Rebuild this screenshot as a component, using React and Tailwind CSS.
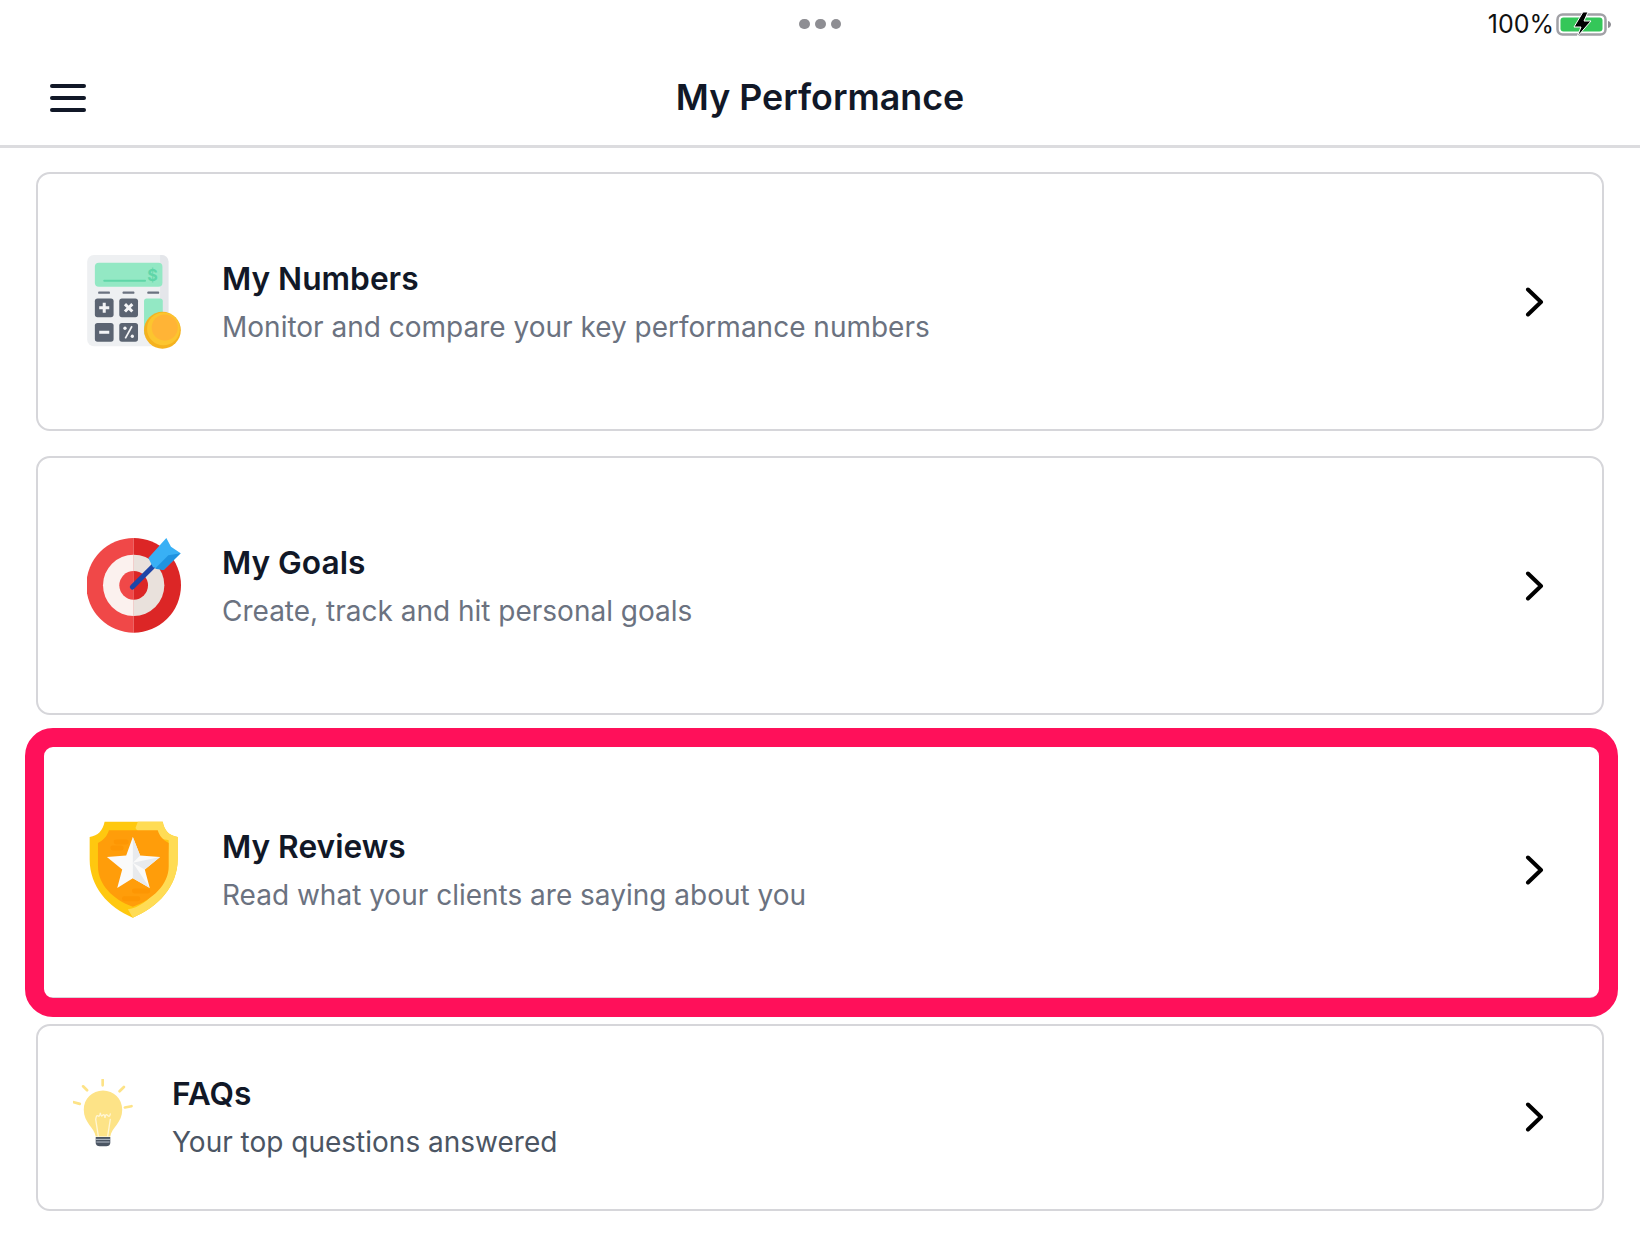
function Chevron() {
  return (
    <svg width="20" height="30" viewBox="0 0 20 30" fill="none" className="shrink-0">
      <path d="M3 2.5 L16 15 L3 27.5" stroke="#000" strokeWidth="4" strokeLinecap="round" strokeLinejoin="round" />
    </svg>
  );
}

function BatteryIcon() {
  return (
    <svg width="58" height="26" viewBox="0 0 58 26">
      <rect x="1.5" y="3.5" width="48" height="20" rx="5" fill="none" stroke="#a1a1a6" strokeWidth="2.5" />
      <rect x="4.5" y="6.5" width="42" height="14" rx="3" fill="#34c759" />
      <path d="M52 10 C54 10.5 55 12 55 13.5 C55 15 54 16.5 52 17 Z" fill="#8e8e93" />
      <path d="M27 1 L18 16 H25 L21 26 L35 10 H28 L32 1 Z" fill="#000" stroke="#fff" strokeWidth="1" />
    </svg>
  );
}

function CalculatorIcon() {
  return (
    <svg width="94" height="97" viewBox="52 45 280 290" className="mt-[4px]">
      <rect x="52" y="45" width="243" height="273" rx="20" fill="#eef0f2" />
      <path d="M270 45 h5 a20 20 0 0 1 20 20 v233 a20 20 0 0 1 -20 20 h-5 z" fill="#e4e6ea" />
      <rect x="75" y="68" width="202" height="72" rx="12" fill="#93e8c4" />
      <rect x="100" y="119" width="128" height="6" rx="3" fill="#5fd6a8" />
      <text x="247" y="124" fontSize="48" fontWeight="700" textAnchor="middle" fill="#5fd6a8" fontFamily="Inter, sans-serif">$</text>
      <rect x="85" y="154" width="35" height="7" rx="2" fill="#6b7280" />
      <rect x="158" y="154" width="35" height="7" rx="2" fill="#6b7280" />
      <rect x="232" y="154" width="35" height="7" rx="2" fill="#6b7280" />
      <rect x="222" y="175" width="56" height="110" rx="8" fill="#93e8c4" />
      <rect x="75" y="175" width="56" height="56" rx="8" fill="#5b6472" />
      <rect x="148" y="175" width="56" height="56" rx="8" fill="#5b6472" />
      <rect x="75" y="248" width="56" height="56" rx="8" fill="#5b6472" />
      <rect x="148" y="248" width="56" height="56" rx="8" fill="#5b6472" />
      <path d="M103 188 V218 M88 203 H118" stroke="#f3f4f6" strokeWidth="9" />
      <path d="M165 192 L187 214 M187 192 L165 214" stroke="#f3f4f6" strokeWidth="9" />
      <path d="M88 276 H118" stroke="#f3f4f6" strokeWidth="9" />
      <path d="M166 294 L186 258" stroke="#f3f4f6" strokeWidth="5" />
      <circle cx="165" cy="264" r="5" fill="#f3f4f6" />
      <circle cx="187" cy="288" r="5" fill="#f3f4f6" />
      <circle cx="277" cy="270" r="55" fill="#f5b21f" />
      <circle cx="280" cy="266" r="49" fill="#fcc52f" />
      <circle cx="284" cy="262" r="39" fill="#ffb436" />
    </svg>
  );
}

function TargetIcon() {
  return (
    <svg width="94" height="95" viewBox="52 40 282 285">
      <path d="M192 40 a142 142 0 0 0 0 284 z" fill="#f04848" />
      <path d="M192 40 a142 142 0 0 1 0 284 z" fill="#dc2626" />
      <path d="M192 90 a92 92 0 0 0 0 184 z" fill="#fbf1ee" />
      <path d="M192 90 a92 92 0 0 1 0 184 z" fill="#e9e1dc" />
      <path d="M192 139 a43 43 0 0 0 0 86 z" fill="#f04848" />
      <path d="M192 139 a43 43 0 0 1 0 86 z" fill="#dc2626" />
      <path d="M188 187 L252 123" stroke="#1e46a8" strokeWidth="15" strokeLinecap="round" />
      <path d="M236 100 L290 40 L304 66 L333 86 L282 136 L250 128 Z" fill="#38b0f5" />
      <path d="M333 86 L282 136 L256 132 L296 92 Z" fill="#1f93e0" />
    </svg>
  );
}

function ShieldIcon() {
  return (
    <svg width="89" height="97" viewBox="58 35 268 290">
      <path d="M105 36 H280 C284 62 300 78 325 82 V150 C325 230 265 295 190 325 C115 295 60 230 60 150 V82 C85 78 100 62 105 36 Z" fill="#ffc80f" />
      <path d="M205 36 H280 C284 62 300 78 325 82 V150 C325 230 265 295 190 325 L175 300 C240 290 298 220 298 92 C270 85 210 80 198 55 Z" fill="#ffdc55" />
      <path d="M118 62 H265 C270 78 280 92 298 100 V170 C298 225 250 270 190 292 C130 270 85 225 85 170 V100 C103 92 113 78 118 62 Z" fill="#ff9d0a" />
      <path d="M140 97 H170 M130 115 H155 M195 245 H235 M165 268 H205" stroke="#fd9603" strokeWidth="15" strokeLinecap="round" />
      <path d="M190 82 L212 138 L272 142 L226 180 L241 236 L190 206 L143 236 L158 180 L112 142 L170 138 Z" fill="#fafafa" />
      <path d="M190 82 L212 138 L190 160 Z M272 142 L226 180 L190 160 Z M241 236 L190 206 L190 160 Z" fill="#e8eaed" />
    </svg>
  );
}

function BulbIcon() {
  return (
    <svg width="60" height="68" viewBox="40 33 180 205" className="mb-[8px]">
      <path d="M108 206 C104 180 72 165 72 126 C72 93 98 68 130 68 C162 68 188 93 188 126 C188 165 156 180 152 206 Z" fill="#fde387" />
      <path d="M116 206 L108 155 M144 206 L152 155 M108 155 C112 128 118 160 122 135 C126 160 132 125 136 150 C140 125 148 160 152 138" fill="none" stroke="#fff6d5" strokeWidth="4" strokeLinecap="round" />
      <path d="M108 208 H152 V226 C152 232 146 236 140 236 H120 C114 236 108 232 108 226 Z" fill="#4b5563" />
      <path d="M108 215 H152 M110 223 H150" stroke="#cbd5e1" strokeWidth="2.5" />
      <path d="M129 35 V52 M70 55 L82 67 M193 57 L180 70 M42 103 L60 108 M216 115 L196 119" stroke="#fde387" strokeWidth="8" strokeLinecap="round" />
    </svg>
  );
}

function Card({ icon, title, desc, height, gap, pad, descColor, children }) {
  return (
    <div className={"relative flex items-center rounded-[14px] border-2 border-[#d6d6da] bg-white pr-[57px] " + height + " " + pad}>
      <div className={"flex shrink-0 items-center " + gap}>
        {icon}
        <div className="flex flex-col pt-[2px]">
          <div className="text-[31.7px] leading-[48px] font-semibold text-[#111827]">{title}</div>
          <div className={"text-[28px] leading-[48px] " + descColor}>{desc}</div>
        </div>
      </div>
      <div className="ml-auto">
        <Chevron />
      </div>
      {children}
    </div>
  );
}

export default function App() {
  return (
    <div className="min-h-[1246px] bg-white font-[family-name:Inter,sans-serif]">
      <div className="relative h-[148px] border-b-[3px] border-[#dcdcdf]">
        <div className="flex h-[48px] items-center justify-center gap-[5px]">
          <span className="h-[10px] w-[11px] rounded-full bg-[#8e8e93]"></span>
          <span className="h-[10px] w-[11px] rounded-full bg-[#8e8e93]"></span>
          <span className="h-[10px] w-[10px] rounded-full bg-[#8e8e93]"></span>
        </div>
        <div className="absolute right-[26px] top-[10px] flex items-center gap-[2px]">
          <span className="text-[25px] leading-[28px] text-[#111]">100%</span>
          <BatteryIcon />
        </div>
        <div className="relative flex h-[96px] items-center justify-center pt-[4px]">
          <div className="absolute left-[50px] top-[36px] flex w-[36px] flex-col gap-[8px]">
            <span className="h-[4px] rounded-full bg-[#111827]"></span>
            <span className="h-[4px] rounded-full bg-[#111827]"></span>
            <span className="h-[4px] rounded-full bg-[#111827]"></span>
          </div>
          <h1 className="text-[35.8px] font-semibold text-[#111827]">My Performance</h1>
        </div>
      </div>
      <div className="flex flex-col gap-[25px] px-[36px] pt-[24px]">
        <Card
          icon={<CalculatorIcon />}
          title="My Numbers"
          desc="Monitor and compare your key performance numbers"
          height="h-[259px]"
          gap="gap-[41px]"
          pad="pl-[49px]"
          descColor="text-[#6b7280]"
        />
        <Card
          icon={<TargetIcon />}
          title="My Goals"
          desc="Create, track and hit personal goals"
          height="h-[259px]"
          gap="gap-[41px]"
          pad="pl-[49px]"
          descColor="text-[#6b7280]"
        />
        <Card
          icon={<ShieldIcon />}
          title="My Reviews"
          desc="Read what your clients are saying about you"
          height="h-[259px]"
          gap="gap-[44px]"
          pad="pl-[51px]"
          descColor="text-[#6b7280]"
        >
          <div className="absolute -bottom-[20px] -left-[13px] -right-[16px] -top-[14px] rounded-[28px] border-[19px] border-[#ff105a]"></div>
        </Card>
        <Card
          icon={<BulbIcon />}
          title="FAQs"
          desc="Your top questions answered"
          height="h-[187px]"
          gap="gap-[39px]"
          pad="pl-[35px] pb-[2px]"
          descColor="text-[#4b5563]"
        />
      </div>
    </div>
  );
}
